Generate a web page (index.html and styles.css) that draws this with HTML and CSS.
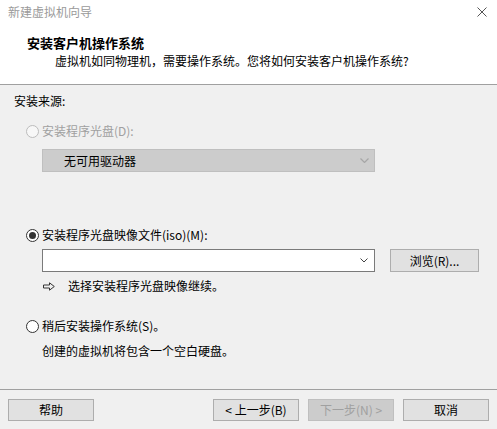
FILE: index.html
```html
<!DOCTYPE html>
<html lang="zh-CN">
<head>
<meta charset="utf-8">
<title>新建虚拟机向导</title>
<link rel="stylesheet" href="styles.css">
</head>
<body>
<div class="window">
  <header class="header">
    <div class="titlebar">
      <span class="title-text">新建虚拟机向导</span>
      <svg class="close" width="10" height="10" viewBox="0 0 10 10"><path d="M0.5 0.5 L9.5 9.5 M9.5 0.5 L0.5 9.5" stroke="#555" stroke-width="1" fill="none"/></svg>
    </div>
    <div class="h-title">安装客户机操作系统</div>
    <div class="h-sub">虚拟机如同物理机，需要操作系统。您将如何安装客户机操作系统?</div>
  </header>

  <main class="content">
    <div class="source-label">安装来源:</div>

    <div class="radio-row row-d disabled">
      <span class="radio"></span><span>安装程序光盘(D):</span>
    </div>
    <div class="combo combo-disabled">
      <span class="combo-text">无可用驱动器</span>
      <svg class="chev" width="9" height="5" viewBox="0 0 9 5"><path d="M0.5 0.5 L4.5 4.5 L8.5 0.5" stroke="#a6a6a6" stroke-width="1.2" fill="none"/></svg>
    </div>

    <div class="radio-row row-m">
      <span class="radio checked"></span><span>安装程序光盘映像文件(iso)(M):</span>
    </div>
    <div class="iso-row">
      <div class="combo combo-edit">
        <span class="combo-text"></span>
        <svg class="chev" width="8" height="5" viewBox="0 0 8 5"><path d="M0.5 0.5 L4 4 L7.5 0.5" stroke="#444" stroke-width="1" fill="none"/></svg>
      </div>
      <button class="btn browse">浏览(R)...</button>
    </div>
    <div class="hint-row">
      <svg class="arrow" width="12" height="9" viewBox="0 0 12 9"><path d="M0.5 3 H6.5 V0.8 L11.3 4.5 L6.5 8.2 V6 H0.5 Z" stroke="#333" stroke-width="1" fill="none"/></svg>
      <span>选择安装程序光盘映像继续。</span>
    </div>

    <div class="radio-row row-s">
      <span class="radio"></span><span>稍后安装操作系统(S)。</span>
    </div>
    <div class="later-text">创建的虚拟机将包含一个空白硬盘。</div>
  </main>

  <footer class="footer">
    <button class="btn">帮助</button>
    <div class="nav">
      <button class="btn">&lt; 上一步(B)</button>
      <button class="btn btn-disabled">下一步(N) &gt;</button>
      <button class="btn">取消</button>
    </div>
  </footer>
</div>
</body>
</html>
```

FILE: styles.css
```css
* { box-sizing: border-box; }
html, body { margin: 0; padding: 0; }
body {
  width: 497px;
  height: 429px;
  background: #f0f0f0;
  font-family: "Microsoft YaHei", "Noto Sans CJK SC", "Noto Sans", sans-serif;
  font-size: 12px;
  color: #000;
  overflow: hidden;
}
.window {
  width: 497px;
  height: 429px;
  display: flex;
  flex-direction: column;
}
.header {
  background: #fff;
  height: 85px;
  border-bottom: 1px solid #a0a0a0;
}
.titlebar {
  height: 24px;
  display: flex;
  align-items: center;
  justify-content: space-between;
  padding: 0 10px 0 8px;
}
.title-text {
  color: #9a9a9a;
  line-height: 24px;
}
.close { display: block; margin-top: 0; }
.h-title {
  margin: 10px 0 0 27px;
  font-size: 13px;
  font-weight: bold;
  line-height: 18px;
}
.h-sub {
  margin-left: 55px;
  line-height: 17px;
}
.content {
  flex: 1;
  padding: 0 14px;
}
.source-label {
  margin-top: 7px;
  line-height: 18px;
}
.radio-row {
  display: flex;
  align-items: center;
  height: 18px;
  line-height: 18px;
  padding-left: 12px;
}
.radio-row.disabled { color: #a0a0a0; }
.radio {
  width: 13px;
  height: 13px;
  border-radius: 50%;
  border: 1px solid #333;
  background: #fff;
  margin-right: 3px;
  position: relative;
  flex: none;
}
.disabled .radio { border-color: #bcbcbc; background: #f7f7f7; }
.radio.checked::after {
  content: "";
  position: absolute;
  left: 2px;
  top: 2px;
  width: 7px;
  height: 7px;
  border-radius: 50%;
  background: #333;
}
.row-d { margin-top: 12px; }
.combo {
  width: 333px;
  height: 23px;
  margin-left: 28px;
  display: flex;
  align-items: center;
  justify-content: space-between;
  padding: 0 5px 0 21px;
}
.combo-disabled {
  margin-top: 9px;
  background: #cccccc;
  border: 1px solid #bfbfbf;
}
.combo-text { line-height: 18px; }
.chev { display: block; }
.row-m { margin-top: 54px; }
.iso-row {
  display: flex;
  align-items: center;
  gap: 15px;
  margin-top: 5px;
}
.combo-edit {
  background: #fff;
  border: 1px solid #7a7a7a;
  padding-right: 6px;
}
.btn {
  font-family: inherit;
  font-size: 12px;
  color: #000;
  height: 22px;
  width: 86px;
  padding: 0;
  background: #e1e1e1;
  border: 1px solid #adadad;
  line-height: 18px;
}
.browse { width: 89px; height: 23px; }
.btn-disabled {
  background: #cccccc;
  border-color: #bfbfbf;
  color: #a0a0a0;
}
.hint-row {
  display: flex;
  align-items: center;
  height: 18px;
  line-height: 18px;
  margin-top: 5px;
  padding-left: 29px;
}
.arrow { display: block; margin-right: 13px; }
.row-s { margin-top: 22px; }
.later-text {
  margin: 7px 0 0 28px;
  line-height: 18px;
}
.footer {
  height: 40px;
  border-top: 1px solid #a0a0a0;
  padding: 9px 8px 0 8px;
  display: flex;
  justify-content: space-between;
  align-items: flex-start;
}
.nav {
  display: flex;
  gap: 9px;
}
```
